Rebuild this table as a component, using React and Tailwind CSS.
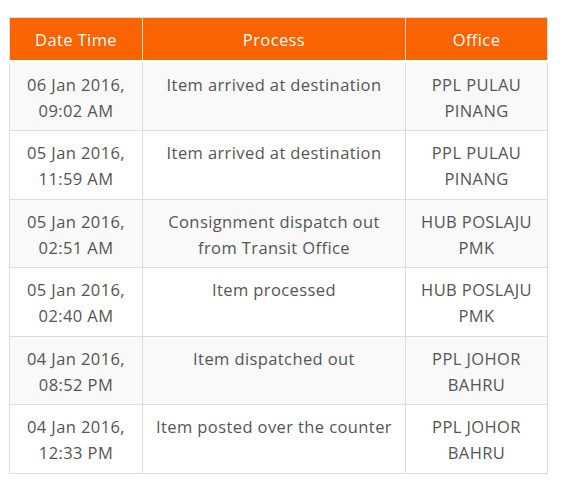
import React from "react";

const rows = [
  ["06 Jan 2016,", "09:02 AM", "Item arrived at destination", "PPL PULAU PINANG"],
  ["05 Jan 2016,", "11:59 AM", "Item arrived at destination", "PPL PULAU PINANG"],
  ["05 Jan 2016,", "02:51 AM", "Consignment dispatch out from Transit Office", "HUB POSLAJU PMK"],
  ["05 Jan 2016,", "02:40 AM", "Item processed", "HUB POSLAJU PMK"],
  ["04 Jan 2016,", "08:52 PM", "Item dispatched out", "PPL JOHOR BAHRU"],
  ["04 Jan 2016,", "12:33 PM", "Item posted over the counter", "PPL JOHOR BAHRU"],
];

export default function App() {
  return (
    <div className="min-h-[486px] w-[570px] bg-white pt-[17px] pl-[9px]" style={{ fontFamily: '"Open Sans", "Noto Sans", sans-serif' }}>
      <table className="w-[538px] table-fixed border-collapse border border-[#dddddd] text-[16.5px] leading-[25.75px] tracking-[0.4px] text-[#555555]">
        <colgroup>
          <col className="w-[133px]" />
          <col className="w-[263px]" />
          <col className="w-[142px]" />
        </colgroup>
        <thead>
          <tr className="bg-[#f96300] text-white">
            <th className="border-r border-r-[#f7dcc8] border-b-[3px] border-b-white px-2 pt-[9px] pb-[7px] text-center font-normal">Date Time</th>
            <th className="border-r border-r-[#f7dcc8] border-b-[3px] border-b-white px-2 pt-[9px] pb-[7px] text-center font-normal">Process</th>
            <th className="border-b-[3px] border-b-white px-2 pt-[9px] pb-[7px] text-center font-normal">Office</th>
          </tr>
        </thead>
        <tbody>
          {rows.map((r, i) => (
            <tr key={i} className={i % 2 === 0 ? "bg-[#f9f9f9]" : "bg-white"}>
              <td className="border border-[#dddddd] px-2 pt-[9px] pb-[7px] text-center align-top">
                {r[0]}
                <br />
                {r[1]}
              </td>
              <td className="border border-[#dddddd] px-2 pt-[9px] pb-[7px] text-center align-top">{r[2]}</td>
              <td className="border border-[#dddddd] px-2 pt-[9px] pb-[7px] text-center align-top">{r[3]}</td>
            </tr>
          ))}
        </tbody>
      </table>
    </div>
  );
}
